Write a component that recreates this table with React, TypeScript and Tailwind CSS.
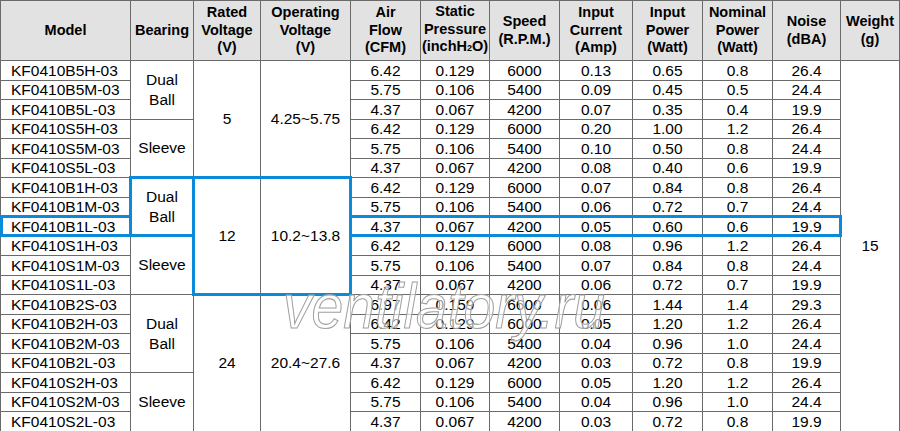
import React from "react";

type Row = [string, string, string, string, string, string, string, string];

const rows: Row[] = [
  ["KF0410B5H-03", "6.42", "0.129", "6000", "0.13", "0.65", "0.8", "26.4"],
  ["KF0410B5M-03", "5.75", "0.106", "5400", "0.09", "0.45", "0.5", "24.4"],
  ["KF0410B5L-03", "4.37", "0.067", "4200", "0.07", "0.35", "0.4", "19.9"],
  ["KF0410S5H-03", "6.42", "0.129", "6000", "0.20", "1.00", "1.2", "26.4"],
  ["KF0410S5M-03", "5.75", "0.106", "5400", "0.10", "0.50", "0.8", "24.4"],
  ["KF0410S5L-03", "4.37", "0.067", "4200", "0.08", "0.40", "0.6", "19.9"],
  ["KF0410B1H-03", "6.42", "0.129", "6000", "0.07", "0.84", "0.8", "26.4"],
  ["KF0410B1M-03", "5.75", "0.106", "5400", "0.06", "0.72", "0.7", "24.4"],
  ["KF0410B1L-03", "4.37", "0.067", "4200", "0.05", "0.60", "0.6", "19.9"],
  ["KF0410S1H-03", "6.42", "0.129", "6000", "0.08", "0.96", "1.2", "26.4"],
  ["KF0410S1M-03", "5.75", "0.106", "5400", "0.07", "0.84", "0.8", "24.4"],
  ["KF0410S1L-03", "4.37", "0.067", "4200", "0.06", "0.72", "0.7", "19.9"],
  ["KF0410B2S-03", "6.97", "0.159", "6600", "0.06", "1.44", "1.4", "29.3"],
  ["KF0410B2H-03", "6.42", "0.129", "6000", "0.05", "1.20", "1.2", "26.4"],
  ["KF0410B2M-03", "5.75", "0.106", "5400", "0.04", "0.96", "1.0", "24.4"],
  ["KF0410B2L-03", "4.37", "0.067", "4200", "0.03", "0.72", "0.8", "19.9"],
  ["KF0410S2H-03", "6.42", "0.129", "6000", "0.05", "1.20", "1.2", "26.4"],
  ["KF0410S2M-03", "5.75", "0.106", "5400", "0.04", "0.96", "1.0", "24.4"],
  ["KF0410S2L-03", "4.37", "0.067", "4200", "0.03", "0.72", "0.8", "19.9"],
];

const bearing: Record<number, [number, React.ReactNode]> = {
  0: [3, <>Dual<br />Ball</>],
  3: [3, "Sleeve"],
  6: [3, <>Dual<br />Ball</>],
  9: [3, "Sleeve"],
  12: [4, <>Dual<br />Ball</>],
  16: [3, "Sleeve"],
};
const voltage: Record<number, [number, string, string]> = {
  0: [6, "5", "4.25~5.75"],
  6: [6, "12", "10.2~13.8"],
  12: [7, "24", "20.4~27.6"],
};

const th =
  "border border-[#6a6a6a] bg-[#e2e2e2] p-0 text-center align-middle font-bold text-[14.5px] leading-[17.5px]";
const td =
  "border border-[#6a6a6a] p-0 text-center align-middle text-[15.5px] leading-none";

export default function App() {
  return (
    <div className="relative w-[900px] h-[431px] overflow-hidden bg-white font-['Liberation_Sans',Arial,sans-serif] text-black">
      <table className="border-collapse table-fixed w-[899px]">
        <colgroup>
          <col className="w-[130px]" />
          <col className="w-[63px]" />
          <col className="w-[67px]" />
          <col className="w-[90px]" />
          <col className="w-[70px]" />
          <col className="w-[69px]" />
          <col className="w-[70px]" />
          <col className="w-[73px]" />
          <col className="w-[70px]" />
          <col className="w-[70px]" />
          <col className="w-[68px]" />
          <col className="w-[59px]" />
        </colgroup>
        <thead>
          <tr className="h-[60px]">
            <th className={th}>Model</th>
            <th className={th}>Bearing</th>
            <th className={th}>Rated<br />Voltage<br />(V)</th>
            <th className={th}>Operating<br />Voltage<br />(V)</th>
            <th className={th}>Air<br />Flow<br />(CFM)</th>
            <th className={th}>Static<br />Pressure<br />(inchH<span className="text-[9px]">2</span>O)</th>
            <th className={th}>Speed<br />(R.P.M.)</th>
            <th className={th}>Input<br />Current<br />(Amp)</th>
            <th className={th}>Input<br />Power<br />(Watt)</th>
            <th className={th}>Nominal<br />Power<br />(Watt)</th>
            <th className={th}>Noise<br />(dBA)</th>
            <th className={th}>Weight<br />(g)</th>
          </tr>
        </thead>
        <tbody>
          {rows.map((r, i) => (
            <tr key={r[0]} className="h-[19.5px]">
              <td className={td + " text-left pl-[10px]"}>{r[0]}</td>
              {bearing[i] && (
                <td className={td} rowSpan={bearing[i][0]}>
                  <div className="leading-[20px]">{bearing[i][1]}</div>
                </td>
              )}
              {voltage[i] && (
                <>
                  <td className={td} rowSpan={voltage[i][0]}>{voltage[i][1]}</td>
                  <td className={td} rowSpan={voltage[i][0]}>{voltage[i][2]}</td>
                </>
              )}
              {r.slice(1).map((v, j) => (
                <td key={j} className={td}>{v}</td>
              ))}
              {i === 0 && (
                <td className={td} rowSpan={19}>15</td>
              )}
            </tr>
          ))}
        </tbody>
      </table>

      {/* blue highlight boxes */}
      <div className="pointer-events-none absolute left-[128.5px] top-[175.5px] w-[66px] h-[61.5px] border-[3px] border-[#0b8ad9]" />
      <div className="pointer-events-none absolute left-[191.5px] top-[175.5px] w-[160px] h-[120px] border-[3px] border-[#0b8ad9]" />
      <div className="pointer-events-none absolute left-[0px] top-[214.5px] w-[131.5px] h-[22.5px] border-[3px] border-[#0b8ad9]" />
      <div className="pointer-events-none absolute left-[348.5px] top-[214.5px] w-[493px] h-[22.5px] border-[3px] border-[#0b8ad9]" />

      {/* watermark */}
      <div className="pointer-events-none absolute left-[283px] top-[281px] text-[57px] leading-none italic text-white/60 [-webkit-text-stroke:1px_#a0a0a0] whitespace-nowrap origin-bottom scale-y-110">
        ventilatory.ru
      </div>
    </div>
  );
}
